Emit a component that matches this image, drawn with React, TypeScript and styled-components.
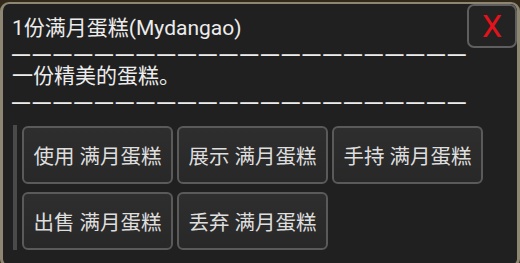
import styled, { createGlobalStyle } from "styled-components";

const GlobalStyle = createGlobalStyle`
  html, body {
    margin: 0;
    padding: 0;
    background: #33291b;
    overflow: hidden;
  }
  body {
    font-family: Roboto, "Noto Sans CJK SC", sans-serif;
  }
`;

const Frame = styled.div`
  box-sizing: border-box;
  width: 520px;
  height: 266px;
  margin-top: 2px;
  border: 3px solid #8d8672;
  border-top-width: 2px;
  border-radius: 9px;
  background: #202020;
  overflow: hidden;
`;

const Header = styled.div`
  display: flex;
  align-items: flex-start;
  justify-content: space-between;
`;

const Info = styled.div`
  flex: 1;
  min-width: 0;
  padding: 12px 0 0 9px;
  color: #ececec;
  font-size: 21px;
  line-height: 24px;
`;

const Line = styled.div`
  white-space: nowrap;
`;

const Dashes = styled.div`
  white-space: nowrap;
  font-family: "Liberation Sans", Arial, sans-serif;
  font-size: 18px;
  font-weight: bold;
  letter-spacing: 2.75px;
  padding-top: 2px;
  margin-bottom: -2px;
`;

const CloseButton = styled.button`
  flex-shrink: 0;
  box-sizing: border-box;
  width: 50px;
  height: 44px;
  margin: 0;
  padding: 0;
  border: 2px solid #5f5f5f;
  border-radius: 7px;
  background: #232323;
  color: #e3121b;
  font-family: Roboto, sans-serif;
  font-size: 32px;
  line-height: 1;
  display: flex;
  align-items: center;
  justify-content: center;
`;

const Actions = styled.div`
  margin: 13px 0 0 10px;
  padding: 1px 0 0 5px;
  border-left: 4px solid #4a4a4a;
  display: grid;
  grid-template-columns: repeat(3, 151px);
  column-gap: 4px;
  row-gap: 8px;
  width: max-content;
`;

const ActionButton = styled.button`
  box-sizing: border-box;
  height: 58px;
  margin: 0;
  padding: 0;
  border: 2px solid #5a5a5a;
  border-radius: 6px;
  background: linear-gradient(#2e2e2e, #282828);
  color: #dedede;
  font-family: Roboto, "Noto Sans CJK SC", sans-serif;
  font-size: 20.5px;
  display: flex;
  align-items: center;
  justify-content: center;
`;

const DASHES = "—".repeat(22);

const actions = ["使用", "展示", "手持", "出售", "丢弃"];

export default function App() {
  return (
    <>
      <GlobalStyle />
      <Frame>
        <Header>
          <Info>
            <Line>1份满月蛋糕(Mydangao)</Line>
            <Dashes>{DASHES}</Dashes>
            <Line>一份精美的蛋糕。</Line>
            <Dashes>{DASHES}</Dashes>
          </Info>
          <CloseButton>X</CloseButton>
        </Header>
        <Actions>
          {actions.map((a) => (
            <ActionButton key={a}>{a} 满月蛋糕</ActionButton>
          ))}
        </Actions>
      </Frame>
    </>
  );
}
